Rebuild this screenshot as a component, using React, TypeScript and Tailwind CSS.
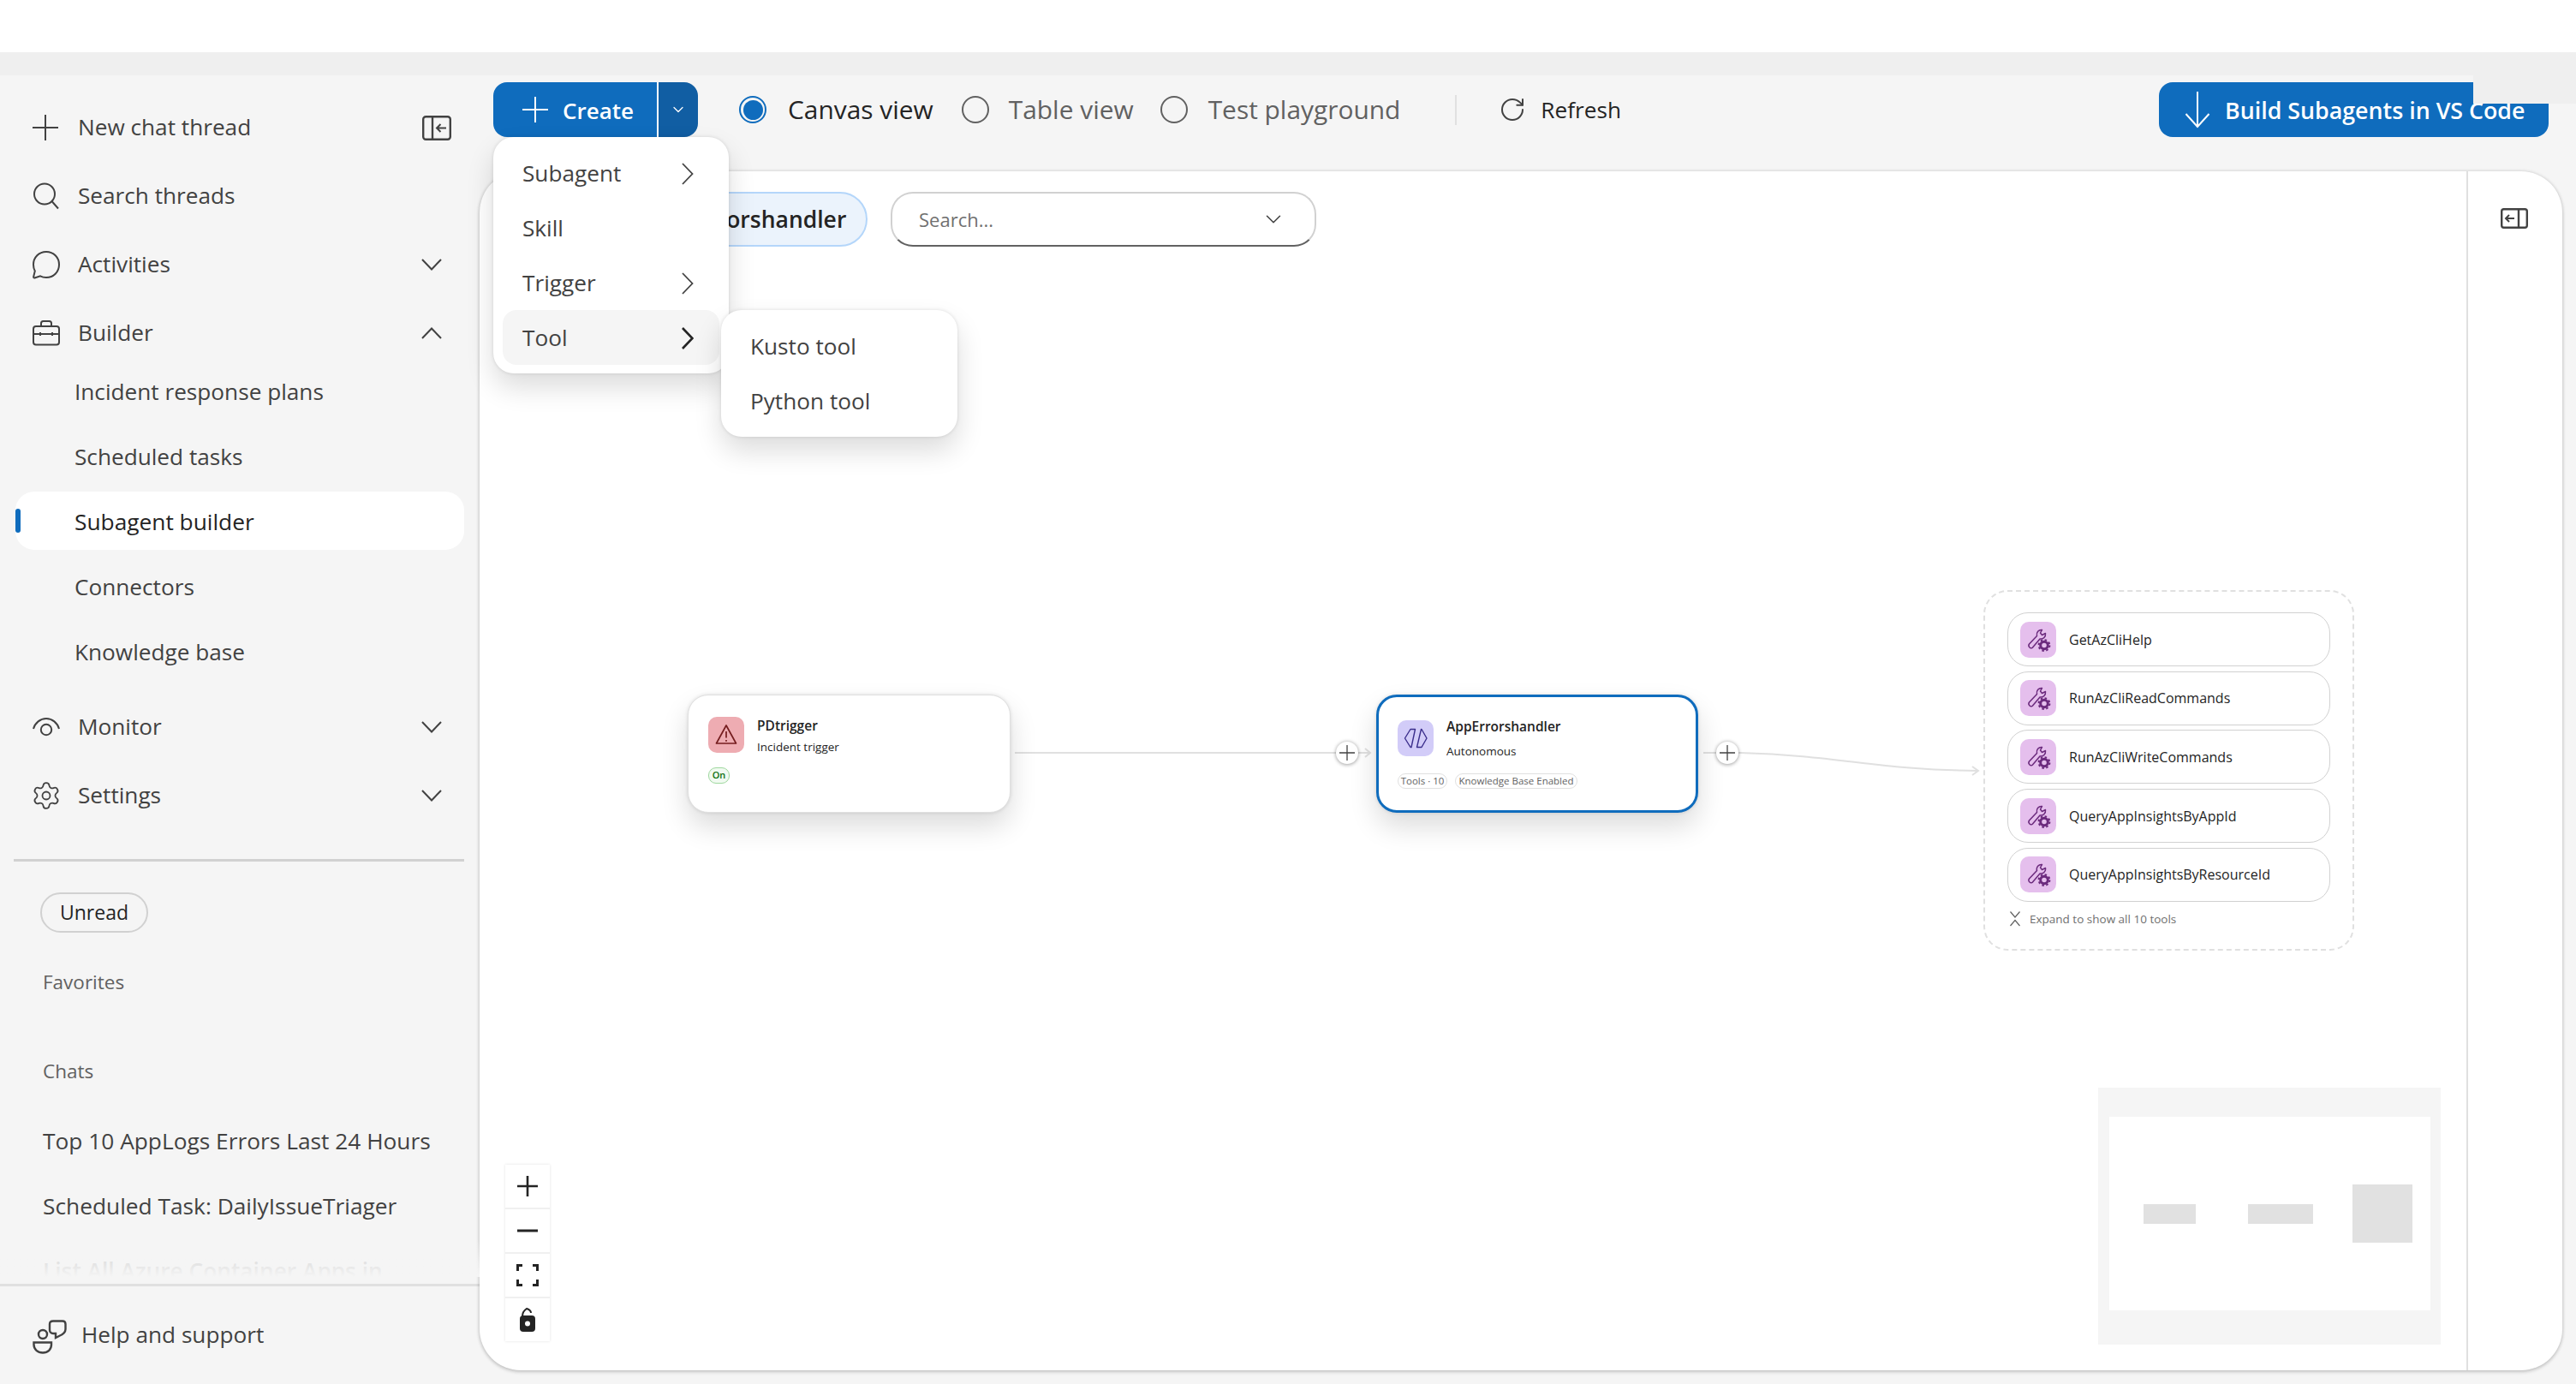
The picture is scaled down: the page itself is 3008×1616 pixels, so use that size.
import React from "react";
import { ChevronDown, RotateCw, Settings } from "lucide-react";

const tools = [
  "GetAzCliHelp",
  "RunAzCliReadCommands",
  "RunAzCliWriteCommands",
  "QueryAppInsightsByAppId",
  "QueryAppInsightsByResourceId",
];

function ThinPlus() {
  return (
    <svg width="30" height="30" viewBox="0 0 30 30" stroke="#424242" strokeWidth="2">
      <path d="M15 0 V30 M0 15 H30" />
    </svg>
  );
}

function SearchIcon() {
  return (
    <svg width="32" height="32" viewBox="0 0 32 32" fill="none" stroke="#424242" strokeWidth="2">
      <circle cx="14" cy="13.5" r="12" />
      <path d="M22.5 22 L30 30.5" />
    </svg>
  );
}

function ChatIcon() {
  return (
    <svg width="32" height="33" viewBox="0 0 32 33" fill="none" stroke="#424242" strokeWidth="2">
      <path d="M16 1 C24.5 1 31 7.5 31 16 C31 24.5 24.5 31 16 31 C13.5 31 11 30.4 9 29.3 L2.5 31.5 C1.5 31.8 1 31 1.2 30 L2.8 23.5 C1.7 21.5 1 19 1 16 C1 7.5 7.5 1 16 1 Z" />
    </svg>
  );
}

function BriefcaseIcon() {
  return (
    <svg width="32" height="30" viewBox="0 0 32 30" fill="none" stroke="#424242" strokeWidth="2">
      <rect x="1" y="7" width="30" height="21.5" rx="3" />
      <path d="M10 7 V3.5 C10 2 11 1 12.5 1 H19.5 C21 1 22 2 22 3.5 V7" />
      <path d="M1 16 H31 M9 14 V18 M23 14 V18" />
    </svg>
  );
}

function EyeIcon() {
  return (
    <svg width="32" height="22" viewBox="0 0 32 22" fill="none" stroke="#424242" strokeWidth="2">
      <path d="M1 13 C3 6 9 1 16 1 C23 1 29 6 31 13" />
      <circle cx="16" cy="14" r="6.2" />
    </svg>
  );
}

function PanelLeftIcon() {
  return (
    <svg width="34" height="29" viewBox="0 0 34 29" fill="none" stroke="#424242" strokeWidth="2.4">
      <rect x="1.2" y="1.2" width="31.6" height="26.6" rx="3" />
      <path d="M12 1.2 V27.8" />
      <path d="M28 14.5 H17 M21.5 10 L17 14.5 L21.5 19" strokeWidth="2" />
    </svg>
  );
}

function PanelRightIcon() {
  return (
    <svg width="32" height="24" viewBox="0 0 32 24" fill="none" stroke="#424242" strokeWidth="2.4">
      <rect x="1.2" y="1.2" width="29.6" height="21.6" rx="2.5" />
      <path d="M21 1.2 V22.8" />
      <path d="M16 12 H6 M10 8 L6 12 L10 16" strokeWidth="2" />
    </svg>
  );
}

function HelpIcon() {
  return (
    <svg width="40" height="40" viewBox="0 0 40 40" fill="none" stroke="#424242" strokeWidth="2.4">
      <circle cx="12" cy="17" r="5" />
      <path d="M1.5 26.5 H22 V29 C22 34.5 18 38.5 12 38.5 C6 38.5 1.5 34.5 1.5 29 Z" />
      <path d="M24 1.5 H35 C37 1.5 38.5 3 38.5 5 V11 C38.5 14.5 36 17 31 19 L27 21 V16 H24 C21.5 16 20 14 20 12 V5 C20 3 21.5 1.5 24 1.5 Z" />
    </svg>
  );
}

function NavChevron({ up }: { up?: boolean }) {
  return (
    <svg width="24" height="14" viewBox="0 0 24 14" fill="none" stroke="#424242" strokeWidth="2">
      <path d={up ? "M1 13 L12 1.5 L23 13" : "M1 1 L12 12.5 L23 1"} />
    </svg>
  );
}

function MenuChevron({ bold }: { bold?: boolean }) {
  return (
    <svg
      width="14"
      height="26"
      viewBox="0 0 14 26"
      fill="none"
      stroke={bold ? "#242424" : "#424242"}
      strokeWidth={bold ? 2.6 : 1.8}
      className="ml-auto mr-[14px]"
    >
      <path d="M1 1 L12.5 13 L1 25" />
    </svg>
  );
}

function Radio({ on }: { on?: boolean }) {
  if (on) {
    return (
      <span className="flex h-[32px] w-[32px] shrink-0 items-center justify-center rounded-full border-2 border-[#0f6cbd]">
        <span className="h-[23px] w-[23px] rounded-full bg-[#0f6cbd]" />
      </span>
    );
  }
  return <span className="block h-[32px] w-[32px] shrink-0 rounded-full border-2 border-[#616161]" />;
}

function NavRow(props: { icon: React.ReactNode; label: string; chevron?: "up" | "down"; right?: React.ReactNode }) {
  return (
    <div className="flex h-[68px] items-center pl-[38px] pr-[44px] text-[26.2px] text-[#424242]">
      <span className="flex w-[53px] shrink-0 items-center">{props.icon}</span>
      <span>{props.label}</span>
      <span className="ml-auto flex items-center">
        {props.chevron === "down" && <NavChevron />}
        {props.chevron === "up" && <NavChevron up />}
        {props.right}
      </span>
    </div>
  );
}

function SubRow(props: { label: string; active?: boolean }) {
  return (
    <div
      className={
        props.active
          ? "relative mx-[18px] flex h-[68px] items-center rounded-[22px] bg-white pl-[69px] pt-[3px] text-[26.3px] text-[#242424]"
          : "mx-[18px] flex h-[68px] items-center pl-[69px] pt-[3px] text-[26.2px] text-[#424242]"
      }
    >
      {props.active && (
        <span className="absolute left-0 top-[20px] h-[28px] w-[6px] rounded-full bg-[#0f6cbd]" />
      )}
      {props.label}
    </div>
  );
}

function Sidebar() {
  return (
    <aside className="flex h-full w-[560px] shrink-0 flex-col pt-[27px]">
      <div className="flex flex-col gap-[12px]">
        <NavRow
          icon={<ThinPlus />}
          label="New chat thread"
          right={
            <span className="mr-[-11px]">
              <PanelLeftIcon />
            </span>
          }
        />
        <NavRow icon={<SearchIcon />} label="Search threads" />
        <NavRow icon={<ChatIcon />} label="Activities" chevron="down" />
        <NavRow icon={<BriefcaseIcon />} label="Builder" chevron="up" />
      </div>
      <div className="mt-[-1px] flex flex-col gap-[8px]">
        <SubRow label="Incident response plans" />
        <SubRow label="Scheduled tasks" />
        <SubRow label="Subagent builder" active />
        <SubRow label="Connectors" />
        <SubRow label="Knowledge base" />
      </div>
      <div className="mt-[21px] flex flex-col gap-[12px]">
        <NavRow icon={<EyeIcon />} label="Monitor" chevron="down" />
        <NavRow
          icon={<Settings size={36} strokeWidth={1.2} color="#424242" className="-ml-[2px]" />}
          label="Settings"
          chevron="down"
        />
      </div>
      <div className="ml-[16px] mt-[40px] h-[3px] w-[526px] bg-[#d1d1d1]" />
      <div className="ml-[47px] mt-[36px] flex h-[47px] w-[126px] items-center justify-center rounded-full border-2 border-[#d1d1d1] text-[23px] text-[#242424]">
        Unread
      </div>
      <div className="ml-[50px] mt-[43px] text-[22.5px] leading-[30px] text-[#616161]">Favorites</div>
      <div className="ml-[50px] mt-[74px] text-[22.5px] leading-[30px] text-[#616161]">Chats</div>
      <div className="relative mt-[33px] min-h-0 flex-1 overflow-hidden pl-[50px] text-[26.3px] text-[#424242]">
        <div className="flex h-[68px] items-center">Top 10 AppLogs Errors Last 24 Hours</div>
        <div className="mt-[8px] flex h-[68px] items-center">Scheduled Task: DailyIssueTriager</div>
        <div className="mt-[8px] flex h-[68px] items-center font-semibold text-[#c4c4c4]">
          List All Azure Container Apps in
        </div>
        <div className="absolute inset-x-0 bottom-0 h-[44px] bg-linear-to-b from-transparent to-[#f5f5f5]" />
      </div>
      <div className="mt-[8px] flex h-[117px] shrink-0 items-center border-t-[3px] border-[#e0e0e0] pl-[38px] text-[26.2px] text-[#424242]">
        <span className="mr-[17px] mt-[4px] flex">
          <HelpIcon />
        </span>
        Help and support
      </div>
    </aside>
  );
}

function Toolbar() {
  return (
    <div className="flex h-[112px] shrink-0 items-start pl-[16px] pt-[8px]">
      <div className="flex h-[64px] w-[239px] shrink-0 overflow-hidden rounded-[16px] text-white">
        <div className="flex w-[191px] items-center bg-[#0f6cbd] pl-[33px] text-[26px] font-semibold">
          <svg width="32" height="32" viewBox="0 0 32 32" stroke="#ffffff" strokeWidth="2" className="mr-[16px]">
            <path d="M16 1 V31 M1 16 H31" />
          </svg>
          <span className="pt-[2px]">Create</span>
        </div>
        <div className="flex flex-1 items-center justify-center border-l-2 border-white bg-[#115ea3]">
          <ChevronDown size={20} strokeWidth={1.5} color="#ffffff" />
        </div>
      </div>
      <div className="ml-[48px] flex h-[64px] items-center text-[29.9px]">
        <Radio on />
        <span className="ml-[25px] text-[#242424]">Canvas view</span>
        <span className="ml-[33px]">
          <Radio />
        </span>
        <span className="ml-[23px] text-[#616161]">Table view</span>
        <span className="ml-[31px]">
          <Radio />
        </span>
        <span className="ml-[24px] text-[#616161]">Test playground</span>
      </div>
      <div className="ml-[64px] mt-[15px] h-[35px] w-[2px] bg-[#e0e0e0]" />
      <div className="ml-[49px] flex h-[64px] items-center text-[26.2px] font-medium text-[#242424]">
        <RotateCw size={32} strokeWidth={1.5} color="#424242" className="mr-[17px]" />
        <span className="pt-[2px]">Refresh</span>
      </div>
      <div className="ml-auto mr-[32px] flex h-[64px] w-[455px] shrink-0 items-center rounded-[16px] bg-[#0f6cbd] pl-[30px] text-[26.8px] font-semibold text-white">
        <svg width="30" height="44" viewBox="0 0 30 44" fill="none" stroke="#ffffff" strokeWidth="2" className="mr-[17px]">
          <path d="M15 1 V41 M1.5 27 L15 42 L28.5 27" />
        </svg>
        <span className="pt-[2px]">Build Subagents in VS Code</span>
      </div>
    </div>
  );
}

function TriangleIcon() {
  return (
    <svg width="26" height="26" viewBox="0 0 26 26" fill="none" stroke="#751d1f" strokeWidth="1.7">
      <path d="M13 2 L24.5 23 H1.5 Z" strokeLinejoin="round" />
      <path d="M13 9 V16.5 M13 19 V20.8" />
    </svg>
  );
}

function AgentIcon() {
  return (
    <svg width="42" height="42" viewBox="0 0 42 42" fill="none" stroke="#3b2e8c" strokeWidth="1.4" strokeLinejoin="round">
      <path d="M20.5 10.5 H15 L8.5 21 L15 31.5 H16 Z" />
      <path d="M27.5 10.5 H28 L34 21 L28 31.5 H22.5 Z" />
    </svg>
  );
}

function WrenchIcon() {
  return (
    <svg width="42" height="42" viewBox="0 0 42 42" fill="none" stroke="#6b2a7d" strokeWidth="1.5" strokeLinejoin="round">
      <path d="M10.5 26 L19.5 16.5 C18.5 12.5 21.5 9 25.5 9.5 L23.5 13 L25.5 15.5 L29.5 13.5 C30 17.5 27 20.5 23 20 L14.5 30 C12.5 32.5 8.5 29 10.5 26 Z" />
      <circle cx="28" cy="27.5" r="4.3" strokeWidth="3" />
      <circle cx="28" cy="27.5" r="6.4" strokeWidth="2" strokeDasharray="2.5 2.5" />
    </svg>
  );
}

function PlusNode() {
  return (
    <span className="flex h-[26px] w-[26px] items-center justify-center rounded-full bg-white shadow-[0_0_4px_rgba(0,0,0,0.3),0_2px_4px_rgba(0,0,0,0.15)]">
      <svg width="20" height="20" viewBox="0 0 20 20" stroke="#424242" strokeWidth="1.3">
        <path d="M10 1 V19 M1 10 H19" />
      </svg>
    </span>
  );
}

function Diagram() {
  return (
    <div className="absolute inset-0">
      <svg width="2320" height="1400" className="absolute left-0 top-0" fill="none" stroke="#e0e0e0" strokeWidth="2">
        <path d="M625 679 H1005" />
        <path d="M1026 679 H1040 M1034 674 L1040 679 L1034 684" />
        <path d="M1429 679 H1444" />
        <path d="M1470 679 C1590 682 1630 699 1750 700 M1743 695 L1750 700 L1743 705" />
      </svg>
      <div className="absolute left-[243px] top-[611px] h-[138px] w-[377px] rounded-[24px] border border-[#e0e0e0] bg-white px-[23px] py-[25px] shadow-[0_0_4px_rgba(0,0,0,0.12),0_16px_32px_rgba(0,0,0,0.14)]">
        <div className="flex">
          <span className="flex h-[42px] w-[42px] items-center justify-center rounded-[10px] bg-[#eeacb2]">
            <TriangleIcon />
          </span>
          <div className="ml-[15px] mt-[-2px] text-[#242424]">
            <div className="text-[15.5px] font-semibold leading-[24px]">PDtrigger</div>
            <div className="text-[13.5px] leading-[26px]">Incident trigger</div>
          </div>
        </div>
        <span className="mt-[11px] flex h-[19px] w-[25px] items-center justify-center rounded-[9px] border border-[#9fd89f] bg-[#f1faf1] text-[11px] font-semibold text-[#0e700e]">
          On
        </span>
      </div>
      <div className="absolute left-[1000px] top-[666px]">
        <PlusNode />
      </div>
      <div className="absolute left-[1047px] top-[611px] h-[138px] w-[376px] rounded-[24px] border-[3px] border-[#0f6cbd] bg-white pl-[22px] pt-[27px] shadow-[0_0_4px_rgba(0,0,0,0.12),0_16px_32px_rgba(0,0,0,0.14)]">
        <div className="flex">
          <span className="flex h-[42px] w-[42px] items-center justify-center rounded-[10px] bg-[#d2ccf8]">
            <AgentIcon />
          </span>
          <div className="ml-[15px] mt-[-5px] text-[#242424]">
            <div className="text-[15.5px] font-semibold leading-[24px]">AppErrorshandler</div>
            <div className="mt-[5px] text-[13.5px] leading-[24px]">Autonomous</div>
          </div>
        </div>
        <div className="mt-[14px] flex gap-[9px] text-[11.5px] text-[#616161]">
          <span className="flex h-[18px] w-[58px] items-center justify-center rounded-full border border-[#e0e0e0]">
            Tools · 10
          </span>
          <span className="flex h-[18px] w-[143px] items-center justify-center rounded-full border border-[#e0e0e0]">
            Knowledge Base Enabled
          </span>
        </div>
      </div>
      <div className="absolute left-[1444px] top-[666px]">
        <PlusNode />
      </div>
      <div className="absolute left-[1756px] top-[489px] h-[421px] w-[433px] rounded-[28px] border-2 border-dashed border-[#e0e0e0] bg-white px-[26px] pt-[24px]">
        <div className="flex flex-col gap-[5.7px]">
          {tools.map((tool) => (
            <div
              key={tool}
              className="flex h-[63px] items-center rounded-[24px] border border-[#d1d1d1] pl-[14px] text-[16px] font-medium text-[#242424]"
            >
              <span className="mr-[15px] flex h-[42px] w-[42px] items-center justify-center rounded-[10px] bg-[#e5bfed]">
                <WrenchIcon />
              </span>
              {tool}
            </div>
          ))}
        </div>
        <div className="ml-[3px] mt-[10px] flex items-center text-[13.5px] text-[#707070]">
          <svg width="12" height="18" viewBox="0 0 12 18" fill="none" stroke="#616161" strokeWidth="1.2" className="mr-[11px]">
            <path d="M0.5 0.5 L6 7 L11.5 0.5 M0.5 17 L6 10.5 L11.5 17" />
          </svg>
          Expand to show all 10 tools
        </div>
      </div>
    </div>
  );
}

function ZoomControls() {
  const base = "flex h-[50px] w-[52px] items-center justify-center bg-white";
  return (
    <div className="absolute left-[30px] top-[1160px] flex flex-col gap-[2px] bg-[#f0f0f0] shadow-[0_0_3px_rgba(0,0,0,0.12)]">
      <div className={base}>
        <svg width="26" height="26" viewBox="0 0 26 26" stroke="#242424" strokeWidth="2.6">
          <path d="M13 1 V25 M1 13 H25" />
        </svg>
      </div>
      <div className={base}>
        <svg width="26" height="4" viewBox="0 0 26 4" stroke="#242424" strokeWidth="3">
          <path d="M1 2 H25" />
        </svg>
      </div>
      <div className={base}>
        <svg width="26" height="26" viewBox="0 0 26 26" fill="none" stroke="#242424" strokeWidth="3">
          <path d="M1.5 8 V1.5 H7 M19 1.5 H24.5 V8 M24.5 18 V24.5 H19 M7 24.5 H1.5 V18" />
        </svg>
      </div>
      <div className={base}>
        <svg width="22" height="30" viewBox="0 0 22 30">
          <path d="M5 11 C5 7 7 4 10 2 C13 3 15 5 15 7" fill="none" stroke="#242424" strokeWidth="2" />
          <rect x="2" y="10" width="18" height="19" rx="4" fill="#242424" />
          <circle cx="11" cy="19.5" r="3" fill="#ffffff" />
        </svg>
      </div>
    </div>
  );
}

function MiniMap() {
  return (
    <div className="absolute bottom-[30px] right-[30px] flex h-[300px] w-[400px] items-center justify-center bg-[#f5f5f5]">
      <div className="mt-[-6px] flex h-[226px] w-[375px] items-center bg-white pl-[40px]">
        <span className="h-[23px] w-[61px] bg-[#e1e1e1]" />
        <span className="ml-[61px] h-[23px] w-[76px] bg-[#e1e1e1]" />
        <span className="ml-[46px] h-[68px] w-[70px] bg-[#e1e1e1]" />
      </div>
    </div>
  );
}

function Canvas() {
  return (
    <div className="mb-[16px] mr-[16px] flex min-h-0 flex-1 overflow-hidden rounded-[48px] bg-white shadow-[0_0_4px_rgba(0,0,0,0.14),0_2px_4px_rgba(0,0,0,0.16)]">
      <div className="relative flex-1">
        <div className="relative z-10 flex items-start pl-[160px] pt-[24px]">
          <div className="flex h-[64px] w-[293px] shrink-0 items-center rounded-full border-2 border-[#b4d6fa] bg-[#ebf3fc] pl-[38px] pt-[2px] text-[26.5px] font-semibold text-[#242424]">
            AppErrorshandler
          </div>
          <div className="ml-[27px] flex h-[64px] w-[497px] shrink-0 items-center rounded-[26px] border-2 border-[#d1d1d1] border-b-[#616161] pl-[31px] pr-[33px] text-[22px] text-[#707070]">
            Search...
            <ChevronDown size={30} strokeWidth={1.2} color="#424242" className="ml-auto" />
          </div>
        </div>
        <Diagram />
        <ZoomControls />
        <MiniMap />
      </div>
      <div className="flex w-[112px] shrink-0 justify-center border-l-2 border-[#e0e0e0] pt-[43px]">
        <span className="ml-[-3px] h-[24px]">
          <PanelRightIcon />
        </span>
      </div>
    </div>
  );
}

function CreateMenu() {
  const row = "flex h-[64px] items-center pl-[23px] pr-[16px] pt-[2px] text-[26.2px] text-[#424242]";
  return (
    <>
      <div className="absolute left-[576px] top-[160px] z-20 h-[276px] w-[275px] rounded-[24px] bg-white px-[11px] pt-[10px] shadow-[0_0_4px_rgba(0,0,0,0.12),0_16px_32px_rgba(0,0,0,0.14)]">
        <div className={row}>
          Subagent
          <MenuChevron />
        </div>
        <div className={row}>Skill</div>
        <div className={row}>
          Trigger
          <MenuChevron />
        </div>
        <div className={row + " rounded-[16px] bg-[#f5f5f5]"}>
          Tool
          <MenuChevron bold />
        </div>
      </div>
      <div className="absolute left-[842px] top-[362px] z-30 h-[148px] w-[276px] rounded-[24px] bg-white pl-[34px] pt-[10px] text-[26.2px] text-[#424242] shadow-[0_0_4px_rgba(0,0,0,0.12),0_16px_32px_rgba(0,0,0,0.14)]">
        <div className="flex h-[64px] items-center pt-[2px]">Kusto tool</div>
        <div className="flex h-[64px] items-center pt-[2px]">Python tool</div>
      </div>
    </>
  );
}

export default function App() {
  return (
    <div className="relative flex h-[1616px] w-[3008px] flex-col overflow-hidden bg-[#f5f5f5] font-['Open_Sans',sans-serif]">
      <div className="h-[61px] shrink-0 bg-white" />
      <div className="h-[27px] shrink-0 bg-[#efefef]" />
      <div className="flex min-h-0 flex-1">
        <Sidebar />
        <main className="flex min-w-0 flex-1 flex-col">
          <Toolbar />
          <Canvas />
        </main>
      </div>
      <CreateMenu />
      <div className="absolute left-[2888px] top-[88px] z-10 h-[33px] w-[120px] bg-[#efefef]" />
    </div>
  );
}
